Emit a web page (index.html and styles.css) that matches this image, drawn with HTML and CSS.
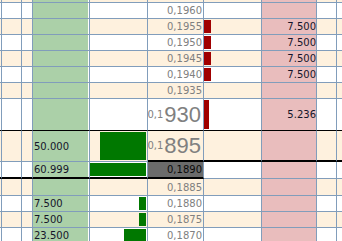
FILE: index.html
```html
<!DOCTYPE html>
<html>
<head>
<meta charset="utf-8">
<link rel="stylesheet" href="styles.css">
</head>
<body>
<div class="book">
  <div class="row alt h2">
    <div class="c"></div><div class="c"></div><div class="c"></div><div class="c bidsz"></div><div class="c bid"></div><div class="c price"></div><div class="c ask"></div><div class="c asksz"></div><div class="c"></div><div class="c last"></div>
  </div>
  <div class="row">
    <div class="c"></div><div class="c"></div><div class="c"></div><div class="c bidsz"></div><div class="c bid"></div><div class="c price">0,1960</div><div class="c ask"></div><div class="c asksz"></div><div class="c"></div><div class="c last"></div>
  </div>
  <div class="row alt">
    <div class="c"></div><div class="c"></div><div class="c"></div><div class="c bidsz"></div><div class="c bid"></div><div class="c price">0,1955</div><div class="c ask"><div class="bar red" style="width:7px"></div></div><div class="c asksz">7.500</div><div class="c"></div><div class="c last"></div>
  </div>
  <div class="row">
    <div class="c"></div><div class="c"></div><div class="c"></div><div class="c bidsz"></div><div class="c bid"></div><div class="c price">0,1950</div><div class="c ask"><div class="bar red" style="width:7px"></div></div><div class="c asksz">7.500</div><div class="c"></div><div class="c last"></div>
  </div>
  <div class="row alt">
    <div class="c"></div><div class="c"></div><div class="c"></div><div class="c bidsz"></div><div class="c bid"></div><div class="c price">0,1945</div><div class="c ask"><div class="bar red" style="width:7px"></div></div><div class="c asksz">7.500</div><div class="c"></div><div class="c last"></div>
  </div>
  <div class="row">
    <div class="c"></div><div class="c"></div><div class="c"></div><div class="c bidsz"></div><div class="c bid"></div><div class="c price">0,1940</div><div class="c ask"><div class="bar red" style="width:7px"></div></div><div class="c asksz">7.500</div><div class="c"></div><div class="c last"></div>
  </div>
  <div class="row alt">
    <div class="c"></div><div class="c"></div><div class="c"></div><div class="c bidsz"></div><div class="c bid"></div><div class="c price">0,1935</div><div class="c ask"></div><div class="c asksz"></div><div class="c"></div><div class="c last"></div>
  </div>
  <div class="row tall best-ask">
    <div class="c"></div><div class="c"></div><div class="c"></div><div class="c bidsz"></div><div class="c bid"></div><div class="c price"><span class="pre">0,1</span><span class="big">930</span></div><div class="c ask"><div class="bar red" style="width:5px"></div></div><div class="c asksz">5.236</div><div class="c"></div><div class="c last"></div>
  </div>
  <div class="row alt tall2 best-bid">
    <div class="c"></div><div class="c"></div><div class="c"></div><div class="c bidsz">50.000</div><div class="c bid"><div class="bar green" style="width:46px"></div></div><div class="c price rb"><span class="pre">0,1</span><span class="big">895</span></div><div class="c ask rb"></div><div class="c asksz rb"></div><div class="c rb"></div><div class="c last rb"></div>
  </div>
  <div class="row last-trade">
    <div class="c lb"></div><div class="c lb"></div><div class="c lb"></div><div class="c bidsz lb">60.999</div><div class="c bid lb"><div class="bar green" style="width:56px"></div></div><div class="c price cur lb">0,1890</div><div class="c ask"></div><div class="c asksz"></div><div class="c"></div><div class="c last"></div>
  </div>
  <div class="row alt h17">
    <div class="c"></div><div class="c"></div><div class="c"></div><div class="c bidsz"></div><div class="c bid"></div><div class="c price">0,1885</div><div class="c ask"></div><div class="c asksz"></div><div class="c"></div><div class="c last"></div>
  </div>
  <div class="row">
    <div class="c"></div><div class="c"></div><div class="c"></div><div class="c bidsz">7.500</div><div class="c bid"><div class="bar green" style="width:7px"></div></div><div class="c price">0,1880</div><div class="c ask"></div><div class="c asksz"></div><div class="c"></div><div class="c last"></div>
  </div>
  <div class="row alt">
    <div class="c"></div><div class="c"></div><div class="c"></div><div class="c bidsz">7.500</div><div class="c bid"><div class="bar green" style="width:7px"></div></div><div class="c price">0,1875</div><div class="c ask"></div><div class="c asksz"></div><div class="c"></div><div class="c last"></div>
  </div>
  <div class="row">
    <div class="c"></div><div class="c"></div><div class="c"></div><div class="c bidsz">23.500</div><div class="c bid"><div class="bar green" style="width:22px"></div></div><div class="c price">0,1870</div><div class="c ask"></div><div class="c asksz"></div><div class="c"></div><div class="c last"></div>
  </div>
</div>
</body>
</html>
```

FILE: styles.css
```css
html, body {
  margin: 0;
  padding: 0;
  background: #ffffff;
}
body {
  width: 342px;
  height: 241px;
  overflow: hidden;
  font-family: "DejaVu Sans", Verdana, sans-serif;
  font-size: 10px;
  color: #15152a;
}
.book {
  display: flex;
  flex-direction: column;
}
.row {
  display: grid;
  grid-template-columns: 2px 20px 11px 57px 58px 56px 58px 55px 20px 5px;
  height: 16px;
  background: #ffffff;
}
.row.alt {
  background: #fef1de;
}
.row.h2 { height: 3px; }
.row.h17 { height: 17px; }
.row.tall { height: 32px; }
.row.tall2 { height: 31px; }
.row.last-trade { height: 17px; }
.c {
  box-sizing: border-box;
  border-right: 1px solid #819dbb;
  border-bottom: 1px solid #819dbb;
  display: flex;
  align-items: center;
  min-width: 0;
  overflow: hidden;
  white-space: nowrap;
}
.c.last {
  border-right: none;
}
.best-ask .c {
  border-bottom-color: #000000;
}
.c.rb {
  border-bottom: 2px solid #000000;
}
.c.lb {
  border-bottom: 2px solid #000000;
}
.bidsz {
  background: #abd0a8;
  box-shadow: inset -1px 0 0 #ffffff;
  padding-left: 1px;
}
.asksz {
  background: #e9bdbd;
  justify-content: flex-end;
  padding-right: 0;
}
.price {
  justify-content: flex-end;
  padding-right: 1px;
  color: #808080;
}
.price.cur {
  background: #6b6b6b;
  color: #0a0a0a;
}
.pre {
  font-size: 10px;
  line-height: 1;
}
.big {
  font-family: "Liberation Sans", Arial, sans-serif;
  font-size: 22px;
  line-height: 1;
  margin-left: 1px;
  margin-right: 1px;
}
.bid {
  justify-content: flex-end;
  align-items: stretch;
  padding: 1px 1px 1px 0;
}
.ask {
  justify-content: flex-start;
  align-items: stretch;
  padding: 1px 0;
}
.bar {
  height: auto;
}
.bar.green {
  background: #007800;
}
.bar.red {
  background: #a00000;
}
```
